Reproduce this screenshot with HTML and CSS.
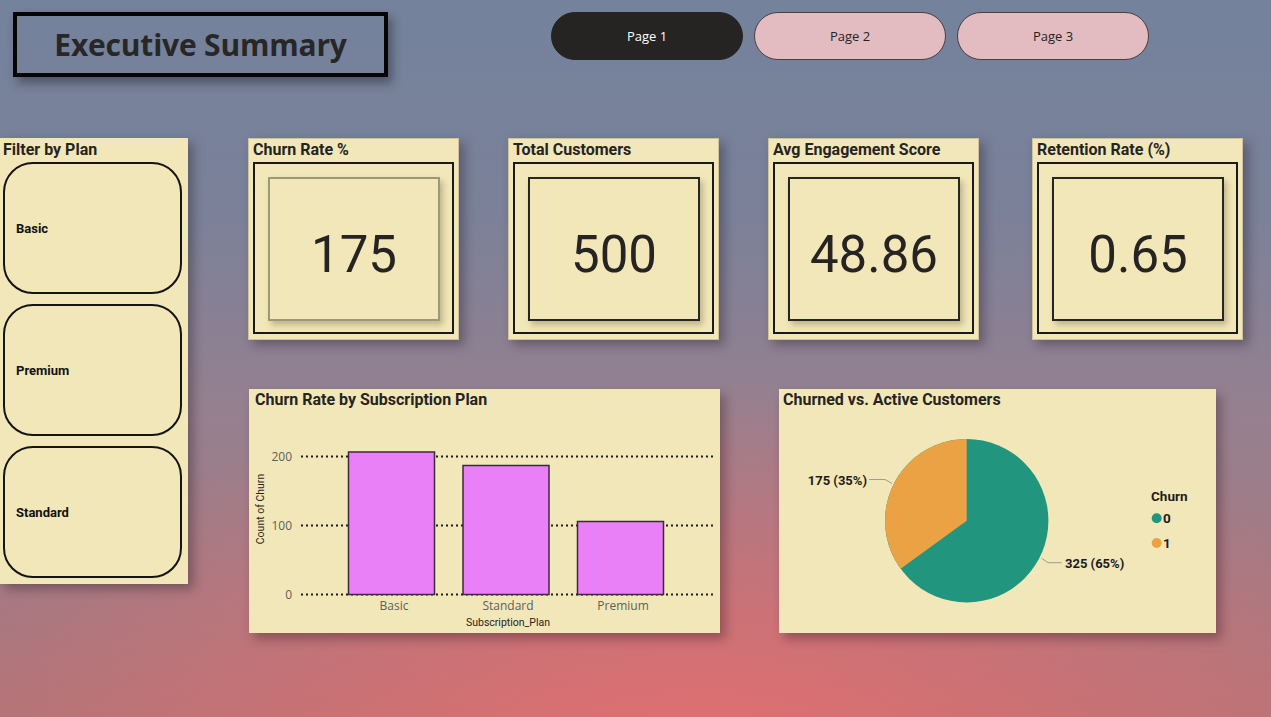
FILE: index.html
```html
<!DOCTYPE html>
<html lang="en">
<head>
<meta charset="utf-8">
<title>Executive Summary</title>
<link rel="stylesheet" href="styles.css">
</head>
<body>
<div class="page">
  <header class="top">
    <div class="title-box"><h1 class="title">Executive Summary</h1></div>
    <nav class="pages">
      <button class="page-btn page-btn--active">Page 1</button>
      <button class="page-btn">Page 2</button>
      <button class="page-btn">Page 3</button>
    </nav>
  </header>
  <main class="main">
    <aside class="filter">
      <div class="filter-title">Filter by Plan</div>
      <div class="slicer-list">
        <div class="slicer">Basic</div>
        <div class="slicer">Premium</div>
        <div class="slicer">Standard</div>
      </div>
    </aside>
    <section class="content">
      <div class="kpis">
        <div class="kpi">
          <div class="card-title">Churn Rate %</div>
          <div class="kpi-frame"><div class="kpi-box kpi-box--muted"><span class="kpi-value">175</span></div></div>
        </div>
        <div class="kpi">
          <div class="card-title">Total Customers</div>
          <div class="kpi-frame"><div class="kpi-box"><span class="kpi-value">500</span></div></div>
        </div>
        <div class="kpi">
          <div class="card-title">Avg Engagement Score</div>
          <div class="kpi-frame"><div class="kpi-box"><span class="kpi-value">48.86</span></div></div>
        </div>
        <div class="kpi kpi--last">
          <div class="card-title">Retention Rate (%)</div>
          <div class="kpi-frame"><div class="kpi-box"><span class="kpi-value">0.65</span></div></div>
        </div>
      </div>
      <div class="charts">
        <div class="chart chart--bar">
          <div class="card-title chart-title">Churn Rate by Subscription Plan</div>
          <svg class="chart-svg" width="471" height="220" viewBox="0 0 471 220">
            <g class="grid">
              <line x1="52" y1="43.5" x2="464" y2="43.5"/>
              <line x1="52" y1="112.5" x2="464" y2="112.5"/>
              <line x1="52" y1="181.5" x2="464" y2="181.5"/>
            </g>
            <g class="ytick">
              <text x="43" y="48">200</text>
              <text x="43" y="117">100</text>
              <text x="43" y="186">0</text>
            </g>
            <g class="bars">
              <rect x="99.5" y="39" width="86" height="142.5"/>
              <rect x="214" y="52.5" width="86" height="129"/>
              <rect x="328.5" y="108.5" width="86" height="73"/>
            </g>
            <g class="xtick">
              <text x="145" y="197">Basic</text>
              <text x="259" y="197">Standard</text>
              <text x="374" y="197">Premium</text>
            </g>
            <text class="axis-title" x="259" y="213" text-anchor="middle">Subscription_Plan</text>
            <text class="axis-title" transform="translate(15,96) rotate(-90)" text-anchor="middle">Count of Churn</text>
          </svg>
        </div>
        <div class="chart chart--pie">
          <div class="card-title chart-title">Churned vs. Active Customers</div>
          <svg class="chart-svg" width="437" height="220" viewBox="0 0 437 220">
            <circle cx="187.7" cy="107.7" r="81.7" fill="#22957f"/>
            <path d="M187.7 107.7 L187.7 26 A81.7 81.7 0 0 0 121.6 155.7 Z" fill="#eaa245"/>
            <polyline class="leader" points="90,66.5 106,66.5 113,70.5"/>
            <polyline class="leader" points="262.7,145.3 269,149.7 282.7,149.7"/>
            <text class="pie-label" x="88" y="72" text-anchor="end">175 (35%)</text>
            <text class="pie-label" x="286" y="155">325 (65%)</text>
            <text class="legend-title" x="372" y="88">Churn</text>
            <circle cx="377.7" cy="105.3" r="5" fill="#22957f"/>
            <text class="legend-item" x="384" y="110">0</text>
            <circle cx="377.7" cy="130" r="5" fill="#eaa245"/>
            <text class="legend-item" x="384" y="135">1</text>
          </svg>
        </div>
      </div>
    </section>
  </main>
</div>
</body>
</html>
```

FILE: styles.css
```css
html, body {
  margin: 0;
  padding: 0;
}

body {
  width: 1271px;
  height: 717px;
  overflow: hidden;
  font-family: Roboto, "Liberation Sans", sans-serif;
  color: #252423;
  background:
    radial-gradient(ellipse 60% 55% at 55% 108%, rgba(230, 110, 112, 0.95) 0%, rgba(230, 110, 112, 0) 100%),
    linear-gradient(180deg, #74829c 0%, #7b8199 30%, #96808f 58%, #b27478 100%);
}

.page {
  padding-top: 12px;
}

/* ---------- header ---------- */
.top {
  display: flex;
  align-items: flex-start;
  height: 126px;
}

.title-box {
  margin-left: 13px;
  width: 375px;
  height: 65px;
  box-sizing: border-box;
  border: 4px solid #050505;
  display: flex;
  align-items: center;
  justify-content: center;
  box-shadow: 4px 6px 9px rgba(30, 30, 40, 0.45);
}

.title {
  margin: 0;
  font-family: "Open Sans", "Liberation Sans", sans-serif;
  font-weight: 700;
  font-size: 30px;
  color: #282727;
  letter-spacing: -0.2px;
}

.pages {
  display: flex;
  gap: 11px;
  margin-left: 163px;
}

.page-btn {
  width: 192px;
  height: 48px;
  border-radius: 24px;
  border: 1px solid #4a4040;
  background: #e2bcc0;
  color: #252423;
  font-family: "Open Sans", "Liberation Sans", sans-serif;
  font-size: 13px;
  padding: 0;
  cursor: pointer;
}

.page-btn--active {
  background: #252423;
  border-color: #252423;
  color: #ffffff;
}

/* ---------- main ---------- */
.main {
  display: flex;
  align-items: flex-start;
}

.filter {
  width: 188px;
  height: 446px;
  box-sizing: border-box;
  background: #f2e7b8;
  padding: 1px 6px 0 3px;
  box-shadow: 5px 5px 10px rgba(40, 30, 40, 0.4);
}

.filter-title {
  font-weight: 700;
  font-size: 16px;
  line-height: 22px;
  height: 23px;
  color: #252423;
}

.slicer-list {
  display: flex;
  flex-direction: column;
  gap: 10px;
}

.slicer {
  height: 132px;
  box-sizing: border-box;
  border: 2px solid #141414;
  border-radius: 30px;
  display: flex;
  align-items: center;
  padding-left: 11px;
  font-weight: 700;
  font-size: 13px;
  color: #111;
}

.content {
  margin-left: 60px;
}

.kpis {
  display: flex;
  gap: 49px;
}

.kpi {
  width: 211px;
  height: 202px;
  box-sizing: border-box;
  background: #f2e7b8;
  border: 1px solid #cfc39c;
  padding: 0 4px 5px 4px;
  display: flex;
  flex-direction: column;
  box-shadow: 5px 5px 10px rgba(40, 30, 50, 0.4);
}

.kpi--last {
  margin-left: 4px;
}

.card-title {
  font-weight: 700;
  font-size: 16px;
  line-height: 22px;
  height: 23px;
  color: #252423;
  white-space: nowrap;
}

.kpi-frame {
  flex: 1;
  border: 2px solid #1a1a1a;
  padding: 13px 12px 11px 13px;
  display: flex;
}

.kpi-box {
  flex: 1;
  border: 2px solid #262626;
  display: flex;
  align-items: center;
  justify-content: center;
  padding-top: 10px;
  box-shadow: 3px 4px 6px rgba(60, 50, 20, 0.28);
}

.kpi-box--muted {
  border-color: #9d977c;
}

.kpi-value {
  font-size: 51px;
  font-weight: 400;
  color: #252423;
  letter-spacing: 0;
}

/* ---------- charts ---------- */
.charts {
  display: flex;
  align-items: flex-start;
  margin-top: 49px;
}

.chart {
  background: #f2e7b8;
  height: 244px;
  box-sizing: border-box;
  box-shadow: 5px 6px 10px rgba(60, 30, 40, 0.4);
  display: flex;
  flex-direction: column;
}

.chart--bar {
  width: 471px;
  margin-left: 1px;
}

.chart--pie {
  width: 437px;
  margin-left: 59px;
}

.chart-title {
  height: 24px;
  line-height: 22px;
  padding-left: 6px;
  box-sizing: border-box;
}

.chart--pie .chart-title {
  padding-left: 4px;
}

.chart-svg {
  display: block;
}

.grid line {
  stroke: #1c1c1c;
  stroke-width: 2;
  stroke-dasharray: 2 3;
}

.ytick text {
  font-family: "Open Sans", "Liberation Sans", sans-serif;
  font-size: 12px;
  fill: #605e5c;
  text-anchor: end;
}

.xtick text {
  font-family: "Open Sans", "Liberation Sans", sans-serif;
  font-size: 12px;
  fill: #605e5c;
  text-anchor: middle;
}

.bars rect {
  fill: #ea80f7;
  stroke: #3a2a3c;
  stroke-width: 1.5;
}

.axis-title {
  font-family: Roboto, "Liberation Sans", sans-serif;
  font-size: 10.5px;
  fill: #252423;
}

.leader {
  fill: none;
  stroke: #a09c90;
  stroke-width: 1;
}

.pie-label {
  font-family: Roboto, "Liberation Sans", sans-serif;
  font-weight: 700;
  font-size: 13px;
  fill: #1c1c1c;
}

.legend-title {
  font-family: Roboto, "Liberation Sans", sans-serif;
  font-weight: 700;
  font-size: 13.5px;
  fill: #1c1c1c;
}

.legend-item {
  font-family: Roboto, "Liberation Sans", sans-serif;
  font-weight: 700;
  font-size: 13.5px;
  fill: #1c1c1c;
}
```
